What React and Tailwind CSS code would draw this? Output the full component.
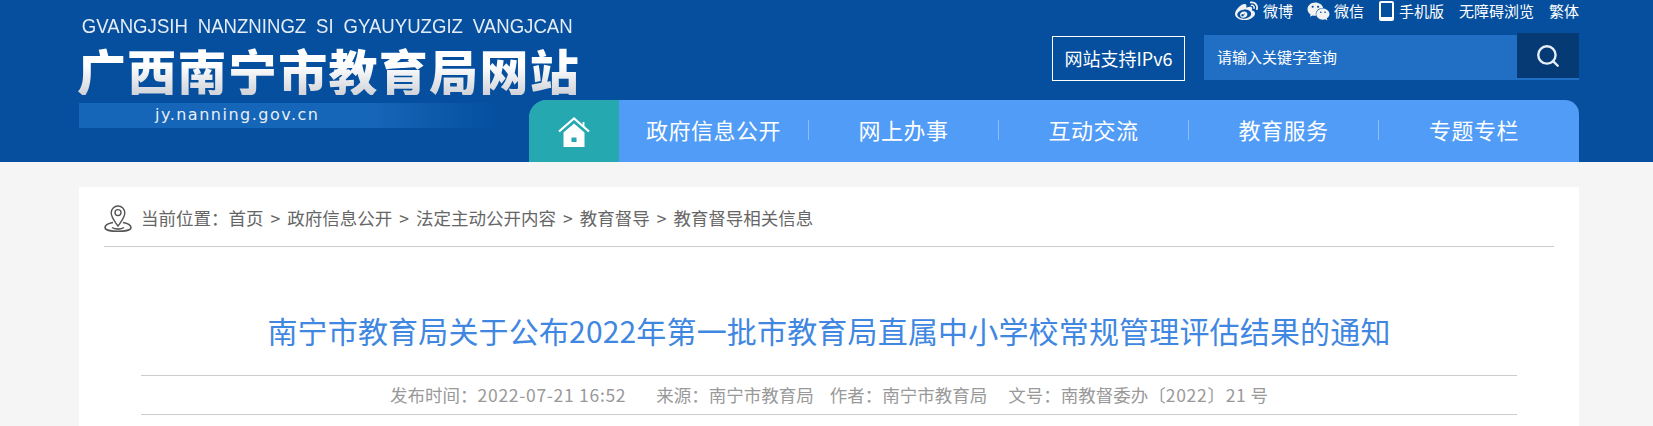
import { Search } from 'lucide-react';
import { FaWeibo, FaWeixin } from 'react-icons/fa';

const cjk = 'font-["Noto_Sans_CJK_SC","Liberation_Sans",sans-serif]';

const navItems = ['政府信息公开', '网上办事', '互动交流', '教育服务', '专题专栏'];
const crumbs = ['首页', '政府信息公开', '法定主动公开内容', '教育督导', '教育督导相关信息'];

const HomeIcon = () => (
    <svg width="32" height="30" viewBox="0 0 32 30" fill="none">
        <path d="M1 14.500 16 1.500l15 13" stroke="#fff" strokeWidth="2.200" />
        <path d="M25.500 5v5" stroke="#fff" strokeWidth="1.800" />
        <path fillRule="evenodd" clipRule="evenodd" d="M5.500 15.500 16 6.500l10.500 9V30H22V18H10v12H5.500z" fill="#fff" />
        <path fillRule="evenodd" clipRule="evenodd" d="M10 18h12v12H10zM13.500 20.500h5v4.500h-5z" fill="#fff" />
    </svg>
);

const PinIcon = () => (
    <svg width="28" height="28" viewBox="0 0 28 28" fill="none" stroke="#555" strokeWidth="1.400">
        <path d="M14 22C10 16.500 7.200 13.500 7.200 8.800a6.800 6.800 0 0 1 13.600 0C20.800 13.500 18 16.500 14 22z" />
        <circle cx="14" cy="8.600" r="3" />
        <path d="M9 18.500C4 19.500 1 21.500 1 23.500 1 26 7 27.400 14 27.400S27 26 27 23.500c0-2-3-4-8-5" strokeWidth="1.600" />
        <path d="M8 23.500c1.500 1.200 3.500 1.600 6 1.600s4.500-.4 6-1.600" strokeWidth="1.600" />
    </svg>
);

const Logo = () => (
    <div className="w-[450px] shrink-0 pt-[14px]">
        <div className='w-[560px] h-[24px] text-[20px] leading-[24px] text-[#e4ecf5] whitespace-nowrap [word-spacing:5px] origin-left scale-x-[0.93] font-["Liberation_Sans",sans-serif] pl-[3px]'>
            GVANGJSIH NANZNINGZ SI GYAUYUZGIZ VANGJCAN
        </div>
        <div className={`w-[510px] h-[50px] mt-[7px] -ml-[2px] text-[49px] leading-[50px] font-black tracking-[1.3px] whitespace-nowrap bg-gradient-to-b from-white from-40% to-[#cfd2d8] bg-clip-text text-transparent ${cjk}`}>
            广西南宁市教育局网站
        </div>
        <div className='w-[420px] h-[25px] mt-[8px] pl-[76px] text-[16px] leading-[24px] tracking-[1.5px] text-[#e8eef6] bg-gradient-to-r from-[#1565b8] from-70% to-[#054f9e] font-["DejaVu_Sans",sans-serif]'>
            jy.nanning.gov.cn
        </div>
    </div>
);

const TopLinks = () => (
    <div className={`flex items-center h-[22px] text-[15px] text-white whitespace-nowrap ${cjk}`}>
        <FaWeibo className="text-[23px] mr-[5px] text-[#f2f2f2]" />
        <span>微博</span>
        <FaWeixin className="text-[23px] ml-[14px] mr-[4px] text-[#f2f2f2]" />
        <span>微信</span>
        <svg width="15" height="20" viewBox="0 0 15 20" className="ml-[15px] mr-[5px]">
            <path fillRule="evenodd" d="M2 0h11a2 2 0 0 1 2 2v16a2 2 0 0 1-2 2H2a2 2 0 0 1-2-2V2a2 2 0 0 1 2-2zM2 2v14h11V2z" fill="#fff" />
        </svg>
        <span>手机版</span>
        <span className="ml-[15px]">无障碍浏览</span>
        <span className="ml-[15px]">繁体</span>
    </div>
);

const SearchRow = () => (
    <div className="flex mt-[11px] h-[47px] items-start">
        <div className={`w-[133px] h-[45px] mt-[3px] border border-white flex items-center justify-center text-[18px] text-white whitespace-nowrap ${cjk}`}>
            网站支持IPv6
        </div>
        <div className="w-[375px] h-[45px] ml-[19px] mt-[2px] bg-[#206fc5] flex items-start justify-between">
            <span className={`pl-[13px] leading-[43px] text-[15px] text-white ${cjk}`}>请输入关键字查询</span>
            <div className="w-[62px] h-[45px] -mt-[2px] bg-[#063a75] flex items-center justify-center">
                <Search size={26} color="#e8eef6" strokeWidth={2.2} />
            </div>
        </div>
    </div>
);

const Nav = () => (
    <div className="w-[1050px] h-[62px] mt-auto flex bg-[#519cf6] rounded-tl-[18px] rounded-tr-[14px] overflow-hidden">
        <div className="w-[90px] bg-[#26a8b0] flex items-center justify-center pt-[2px]">
            <HomeIcon />
        </div>
        {navItems.map((item, i) => (
            <div key={item} className="w-[190px] flex items-center pb-[3px]">
                <span className={`flex-1 text-center text-[22px] tracking-[0.5px] text-white whitespace-nowrap ${cjk}`}>{item}</span>
                {i < navItems.length - 1 && <span className="w-px h-[20px] bg-[#8fbdf5]" />}
            </div>
        ))}
    </div>
);

export default function App() {
    return (
        <div className="h-[426px] overflow-hidden bg-[#f5f5f5]">
            <header className="h-[162px] bg-[#054f9e]">
                <div className="ml-[79px] w-[1500px] h-full flex justify-between">
                    <Logo />
                    <div className="flex flex-col items-end">
                        <TopLinks />
                        <SearchRow />
                        <Nav />
                    </div>
                </div>
            </header>

            <main className={`ml-[79px] mt-[25px] w-[1500px] h-[239px] bg-white px-[25px] ${cjk}`}>
                {/* Breadcrumb */}
                <div className="h-[60px] flex items-center border-b border-[#ccc] pt-[3px] text-[17.5px] text-[#666] whitespace-nowrap">
                    <PinIcon />
                    <span className="ml-[9px]">当前位置：</span>
                    {crumbs.map((c, i) => (
                        <span key={c}>
                            {i > 0 && <span className="mx-[7px]">&gt;</span>}
                            {c}
                        </span>
                    ))}
                </div>

                <h1 className="mt-[61px] text-center text-[30px] tracking-[0.17px] leading-[44px] text-[#3f87e0] whitespace-nowrap">
                    南宁市教育局关于公布2022年第一批市教育局直属中小学校常规管理评估结果的通知
                </h1>

                {/* Meta */}
                <div className="mx-[37px] mt-[23px] h-[40px] border-y border-[#ccc] flex items-center justify-center text-[17.5px] text-[#999] whitespace-nowrap">
                    <span>发布时间：<span className="tracking-[0.7px]">2022-07-21 16:52</span></span>
                    <span className="ml-[30px]">来源：南宁市教育局</span>
                    <span className="ml-[16px]">作者：南宁市教育局</span>
                    <span className="ml-[21px]">文号：南教督委办〔<span className="tracking-[0.7px]">2022〕21</span> 号</span>
                </div>
            </main>
        </div>
    );
}
